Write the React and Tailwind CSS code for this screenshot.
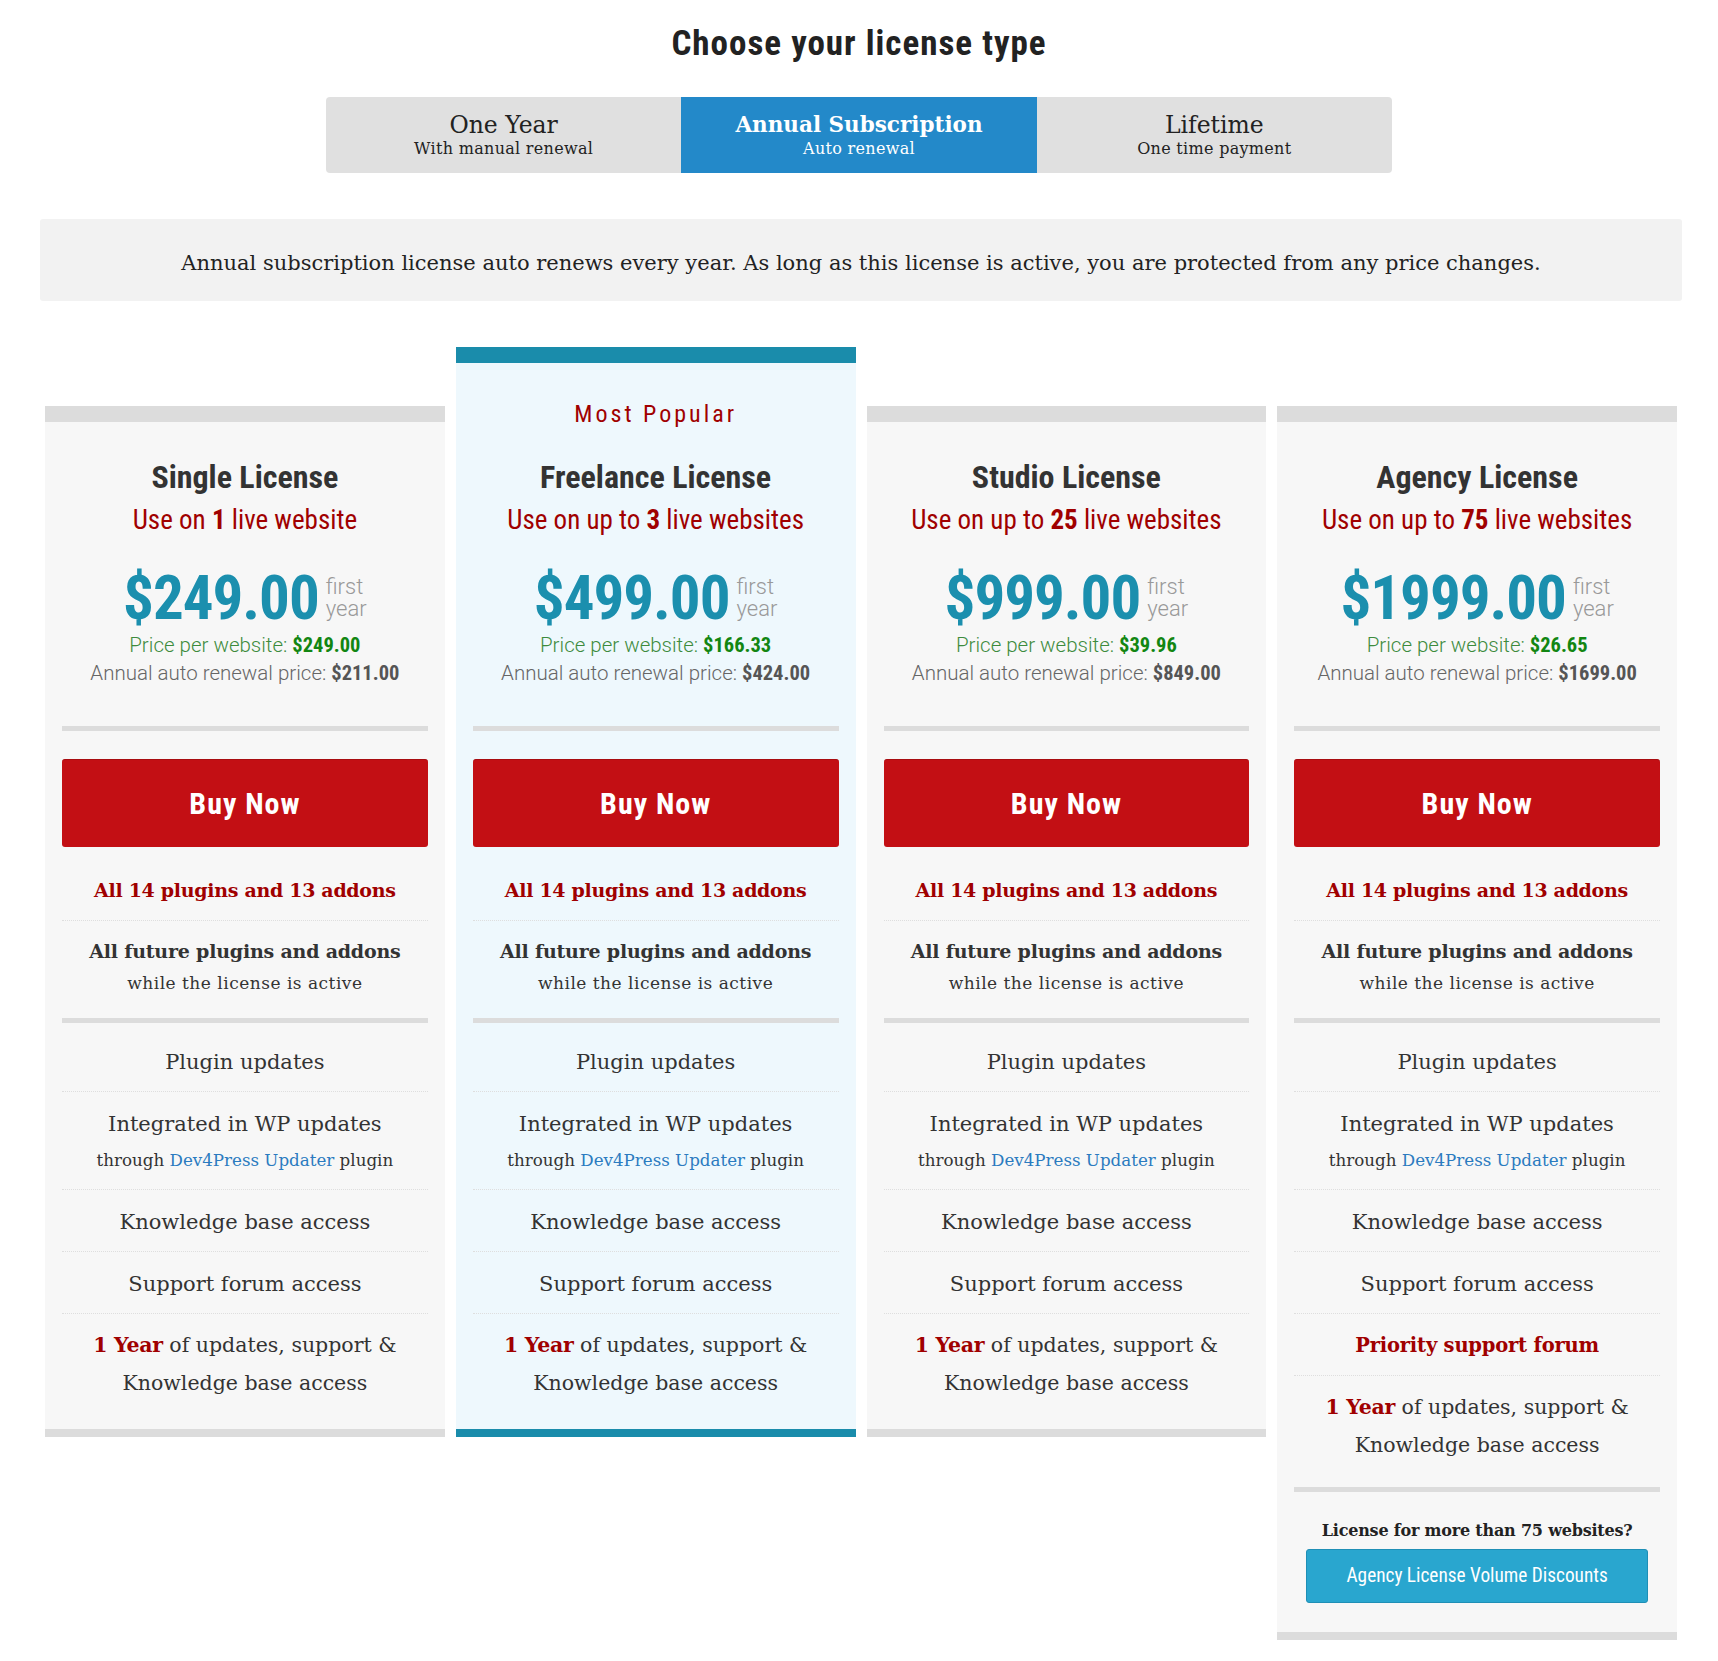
const SLAB = "font-['Roboto_Slab','DejaVu_Serif',serif]";
const COND = "font-['Roboto_Condensed','Liberation_Sans_Narrow','DejaVu_Sans_Condensed',Roboto,sans-serif]";
const ROBOTO = "font-['Roboto','Liberation_Sans',sans-serif]";

const TABS = [
  { title: "One Year", sub: "With manual renewal" },
  { title: "Annual Subscription", sub: "Auto renewal", active: true },
  { title: "Lifetime", sub: "One time payment" },
];

const PLANS = [
  { name: "Single License", use: "on", count: "1", unit: "live website", price: "$249.00", per: "$249.00", renew: "$211.00" },
  { name: "Freelance License", use: "on up to", count: "3", unit: "live websites", price: "$499.00", per: "$166.33", renew: "$424.00", featured: true },
  { name: "Studio License", use: "on up to", count: "25", unit: "live websites", price: "$999.00", per: "$39.96", renew: "$849.00" },
  { name: "Agency License", use: "on up to", count: "75", unit: "live websites", price: "$1999.00", per: "$26.65", renew: "$1699.00", agency: true },
];

function Row({ children, last }) {
  return (
    <div
      className={
        "text-center " +
        (last ? "pt-[12px] pb-[23px]" : "pt-[16px] pb-[13px] border-b border-dotted border-[#dedede]")
      }
    >
      {children}
    </div>
  );
}

function Card({ plan }) {
  const f = plan.featured;
  return (
    <div className={f ? "" : "mt-[59px]"}>
      <div className={"h-[16px] " + (f ? "bg-[#1a8cab]" : "bg-[#dcdcdc]")} />
      <div className={"px-[17px] pt-[37px] pb-[4px] " + (f ? "bg-[#eef8fd]" : "bg-[#f7f7f7]")}>
        {f && (
          <div className={`${COND} text-center text-[24px] leading-[28px] tracking-[3px] text-[#a00000] mb-[31px]`}>
            Most Popular
          </div>
        )}
        <div className={`${COND} text-center text-[32px] leading-[36px] font-bold text-[#333]`}>{plan.name}</div>
        <div className={`${COND} text-center text-[27px] leading-[32px] mt-[9px] text-[#a00000]`}>
          Use {plan.use} <span className="font-bold">{plan.count}</span> {plan.unit}
        </div>
        <div className="mt-[30px] flex items-center justify-center gap-[7px]">
          <span className={`${COND} text-[61px] leading-[64px] font-bold tracking-[-1px] text-[#1b8fae]`}>{plan.price}</span>
          <span className={`${ROBOTO} font-light text-[22px] leading-[22px] text-[#999] flex flex-col`}>
            <span>first</span>
            <span>year</span>
          </span>
        </div>
        <div className={`${ROBOTO} text-center font-light text-[20.5px] leading-[28px] mt-[1px] text-[#3d8b3d]`}>
          Price per website: <span className={`${COND} font-bold text-[#128612]`}>{plan.per}</span>
        </div>
        <div className={`${ROBOTO} text-center font-light text-[20.5px] leading-[28px] text-[#666]`}>
          Annual auto renewal price: <span className={`${COND} font-bold text-[#555]`}>{plan.renew}</span>
        </div>
        <div className="mt-[39px] h-[5px] bg-[#dcdcdc]" />
        <button
          className={`${COND} mt-[28px] w-full h-[88px] rounded-[3px] bg-[#c30f14] border-t border-[#a80c10] text-white text-[30px] font-bold tracking-[1px]`}
        >
          Buy Now
        </button>

        <div className={`${SLAB} mt-[14px] text-[#333]`}>
          <div className="pt-[14px] pb-[15px] border-b border-dotted border-[#dedede] text-center text-[19px] leading-[30px] font-bold tracking-[-0.3px] text-[#a00000]">
            All 14 plugins and 13 addons
          </div>
          <div className="pt-[14px] pb-[21px] text-center">
            <div className="text-[19px] leading-[32px] font-bold tracking-[-0.2px]">All future plugins and addons</div>
            <div className="mt-[2px] text-[17px] leading-[28px] tracking-[0.5px]">while the license is active</div>
          </div>
          <div className="h-[5px] bg-[#dcdcdc] mb-[7px]" />
          <Row>
            <div className="text-[21px] leading-[32px]">Plugin updates</div>
          </Row>
          <div className="pt-[16px] pb-[15px] text-center border-b border-dotted border-[#dedede]">
            <div className="text-[21px] leading-[32px]">Integrated in WP updates</div>
            <div className="mt-[6px] text-[16.7px] leading-[28px]">
              through <span className="text-[#2b7bc0]">Dev4Press Updater</span> plugin
            </div>
          </div>
          <Row>
            <div className="text-[21px] leading-[32px]">Knowledge base access</div>
          </Row>
          <Row>
            <div className="text-[21px] leading-[32px]">Support forum access</div>
          </Row>
          {plan.agency && (
            <Row>
              <div className="text-[19.5px] leading-[32px] font-bold tracking-[-0.2px] text-[#a00000]">Priority support forum</div>
            </Row>
          )}
          <Row last>
            <div className="text-[20.5px] leading-[38px]">
              <span className="font-bold tracking-[-0.3px] text-[#a00000]">1 Year</span> of updates, support &amp;
              <br />
              Knowledge base access
            </div>
          </Row>
          {plan.agency && (
            <div>
              <div className="h-[5px] bg-[#dcdcdc]" />
              <div className="mt-[27px] text-center text-[16px] leading-[24px] font-bold tracking-[-0.2px] text-[#222]">
                License for more than 75 websites?
              </div>
              <div className="px-[12px] pt-[6px] pb-[25px]">
                <button
                  className={`${COND} w-full h-[54px] rounded-[3px] bg-[#29a6cf] border border-[#1f8fb6] text-white text-[19.3px]`}
                >
                  Agency License Volume Discounts
                </button>
              </div>
            </div>
          )}
        </div>
      </div>
      <div className={"h-[8px] " + (f ? "bg-[#1a8cab]" : "bg-[#dcdcdc]")} />
    </div>
  );
}

export default function App() {
  return (
    <div className="w-full min-h-[1661px] bg-white pt-[22px]">
      <h1 className={`${COND} text-center text-[35px] leading-[44px] font-bold tracking-[1px] text-[#222]`}>
        Choose your license type
      </h1>

      <div className="mt-[31px] mx-auto w-[1066px] h-[76px] rounded-[4px] bg-[#e0e0e0] flex overflow-hidden">
        {TABS.map((t) => (
          <div
            key={t.title}
            className={
              `${SLAB} flex-1 flex flex-col items-center justify-center ` +
              (t.active ? "bg-[#2389c9] text-white" : "text-[#222]")
            }
          >
            <div className={"leading-[28px] " + (t.active ? "text-[21.5px] font-bold" : "text-[23.5px]")}>{t.title}</div>
            <div className="text-[16px] leading-[20px] tracking-[0.3px]">{t.sub}</div>
          </div>
        ))}
      </div>

      <div
        className={`${SLAB} mt-[46px] ml-[40px] w-[1642px] rounded-[3px] bg-[#f2f2f2] pt-[29px] pb-[23px] text-center text-[21px] leading-[30px] text-[#222]`}
      >
        Annual subscription license auto renews every year. As long as this license is active, you are protected from any price changes.
      </div>

      <div className="mt-[46px] ml-[45px] w-[1632px] grid grid-cols-4 gap-x-[11px] items-start">
        {PLANS.map((p) => (
          <Card key={p.name} plan={p} />
        ))}
      </div>
    </div>
  );
}
